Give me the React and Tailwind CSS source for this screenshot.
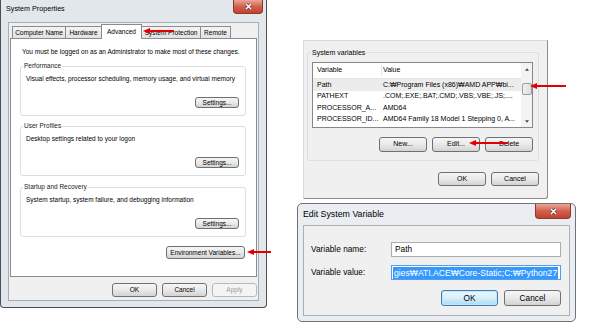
const font = "font-['Liberation_Sans',Arial,'DejaVu_Sans',sans-serif]";
const btn =
  "flex shrink-0 items-center justify-center rounded-[3px] border border-[#707070] bg-linear-to-b from-[#f6f6f6] via-[#e9e9e9] to-[#d3d3d3] text-black";

function CloseBtn({ className }) {
  return (
    <div
      className={`flex items-center justify-center rounded-b-[4px] border border-t-0 border-[#8a3a2e] bg-linear-to-b from-[#e9a798] via-[#d2604d] to-[#c6412d] ${className}`}
    >
      <svg viewBox="0 0 10 8" className="h-[7px] w-[9px]">
        <path d="M2 1 L8 7 M8 1 L2 7" stroke="#4a1c14" strokeWidth="3" />
        <path d="M2 1 L8 7 M8 1 L2 7" stroke="#fff" strokeWidth="1.7" />
      </svg>
    </div>
  );
}

function Group({ label, text, className = "" }) {
  return (
    <div className={`relative ml-[9px] h-[50px] w-[226px] shrink-0 rounded-[3px] border border-[#d5dfe5] ${className}`}>
      <span className="absolute -top-[5px] left-[2px] bg-white px-[1px] leading-[8px] text-[#1b1b1b]">{label}</span>
      <div className="pl-[5px] pt-[8px] leading-[8px]">{text}</div>
      <div className="mt-[14px] flex justify-end pr-[6px]">
        <div className={`${btn} h-[11px] w-[44px]`}>Settings...</div>
      </div>
    </div>
  );
}

function SystemProperties() {
  const tabs = [
    { name: "Computer Name", w: "w-[54px]" },
    { name: "Hardware", w: "w-[37px]" },
    { name: "Advanced", w: "w-[41px]", active: true },
    { name: "System Protection", w: "w-[60px]" },
    { name: "Remote", w: "w-[31px]" },
  ];
  return (
    <div className="absolute left-0 top-0 flex h-[308px] w-[267px] flex-col rounded-b-[4px] border border-t-0 border-[#4b4f55] bg-[#e2e7ec] text-[6.5px]">
      <div className="relative flex h-[22px] shrink-0 items-center pb-[4px] pl-[5px] text-[7.2px] text-black">
        System Properties
        <CloseBtn className="absolute right-[3px] top-0 h-[14px] w-[30px]" />
      </div>
      <div className="mx-[7px] mb-[6px] flex flex-1 flex-col border border-[#a5adb6] bg-[#f0f0f0] px-[1px] pt-[1px]">
        <div className="ml-[2px] flex h-[14px] items-end">
          {tabs.map((t, i) =>
            t.active ? (
              <div
                key={t.name}
                className={`relative z-10 -mb-px -ml-px flex h-[15px] items-start justify-center border border-b-0 border-[#898c95] bg-white pt-[2px] ${t.w}`}
              >
                {t.name}
              </div>
            ) : (
              <div
                key={t.name}
                className={`flex h-[12px] items-center justify-center border border-b-0 border-[#898c95] bg-linear-to-b from-[#f4f4f4] to-[#e2e2e2] ${i ? "-ml-px" : ""} ${t.w}`}
              >
                {t.name}
              </div>
            )
          )}
        </div>
        <div className="flex h-[239px] flex-col border border-[#898c95] bg-white">
          <p className="mt-[9px] pl-[11px] leading-[8px]">
            You must be logged on as an Administrator to make most of these changes.
          </p>
          <Group
            className="mt-[10px]"
            label="Performance"
            text="Visual effects, processor scheduling, memory usage, and virtual memory"
          />
          <Group className="mt-[10px]" label="User Profiles" text="Desktop settings related to your logon" />
          <Group
            className="mt-[11px]"
            label="Startup and Recovery"
            text="System startup, system failure, and debugging information"
          />
          <div className="mt-[9px] flex justify-end pr-[11px]">
            <div className={`${btn} h-[13px] w-[79px]`}>Environment Variables...</div>
          </div>
        </div>
        <div className="mt-[6px] flex justify-end gap-[5px]">
          <div className={`${btn} h-[14px] w-[45px]`}>OK</div>
          <div className={`${btn} h-[14px] w-[45px]`}>Cancel</div>
          <div className="flex h-[14px] w-[45px] items-center justify-center rounded-[3px] border border-[#b5b9bd] bg-[#f4f4f4] text-[#9a9a9a]">
            Apply
          </div>
        </div>
      </div>
    </div>
  );
}

function SystemVariables() {
  const rows = [
    ["Path", "C:₩Program Files (x86)₩AMD APP₩bi..."],
    ["PATHEXT", ".COM;.EXE;.BAT;.CMD;.VBS;.VBE;.JS;...."],
    ["PROCESSOR_A...", "AMD64"],
    ["PROCESSOR_ID...", "AMD64 Family 18 Model 1 Stepping 0, A..."],
  ];
  return (
    <div className="absolute left-[303px] top-[40px] flex h-[159px] w-[245px] flex-col rounded-br-[3px] border border-[#dadada] border-b-[#8c8c8c] border-r-[#8c8c8c] bg-[#f0f0f0] px-[3px] text-[7px]">
      <div className="relative mr-[5px] mt-[11px] flex h-[109px] flex-col rounded-[3px] border border-[#d5dfe5]">
        <span className="absolute -top-[5px] left-[3px] bg-[#f0f0f0] px-[1px] leading-[9px]">System variables</span>
        <div className="ml-[4px] mr-[5px] mt-[9px] flex h-[66px] border border-[#828790] bg-white">
          <div className="flex flex-1 flex-col">
            <div className="flex h-[16px] shrink-0 items-center border-b border-[#e5e5e5]">
              <div className="w-[69px] border-r border-[#e5e5e5] pl-[4px]">Variable</div>
              <div className="pl-[1px]">Value</div>
            </div>
            {rows.map(([k, v], i) => (
              <div key={k} className={`flex h-[11.5px] shrink-0 items-center ${i === 0 ? "bg-[#ececec]" : ""}`}>
                <div className="w-[69px] pl-[4px]">{k}</div>
                <div className="whitespace-nowrap pl-[1px]">{v}</div>
              </div>
            ))}
          </div>
          <div className="flex w-[11px] flex-col items-center bg-[#f3f3f3]">
            <svg viewBox="0 0 6 4" className="mt-[5px] h-[3px] w-[4px]">
              <path d="M0 4 L3 0 L6 4 Z" fill="#444" />
            </svg>
            <div className="mt-[12px] h-[12px] w-[10px] rounded-[2px] border border-[#9b9b9b] bg-linear-to-r from-[#f2f2f2] to-[#dcdcdc]" />
            <svg viewBox="0 0 6 4" className="mt-auto mb-[4px] h-[3px] w-[4px]">
              <path d="M0 0 L3 4 L6 0 Z" fill="#444" />
            </svg>
          </div>
        </div>
        <div className="mt-[9px] flex justify-end gap-[5px] pr-[5px]">
          <div className={`${btn} h-[15px] w-[48px]`}>New...</div>
          <div className={`${btn} h-[15px] w-[48px]`}>Edit...</div>
          <div className={`${btn} h-[15px] w-[48px]`}>Delete</div>
        </div>
      </div>
      <div className="mr-[5px] mt-[11px] flex justify-end gap-[5px]">
        <div className={`${btn} h-[14px] w-[48px]`}>OK</div>
        <div className={`${btn} h-[14px] w-[48px]`}>Cancel</div>
      </div>
    </div>
  );
}

function EditVariable() {
  return (
    <div className="absolute left-[297px] top-[203px] flex h-[119px] w-[279px] flex-col rounded-[5px] border border-[#6f7378] bg-[#eaeef2] text-[8.3px]">
      <div className="relative flex h-[21px] shrink-0 items-center pl-[5px] text-[8.8px]">
        Edit System Variable
        <CloseBtn className="absolute right-[4px] top-0 h-[15px] w-[36px]" />
      </div>
      <div className="mx-[5px] mb-[5px] flex flex-1 flex-col border border-[#a9b1b9] bg-[#f0f0f0] px-[7px]">
        <div className="mt-[16px] flex h-[15px] items-center">
          <div className="w-[80px]">Variable name:</div>
          <div className="flex h-[15px] w-[170px] items-center border border-[#abadb3] bg-white pl-[3px]">Path</div>
        </div>
        <div className="mt-[8px] flex h-[15px] items-center">
          <div className="w-[80px]">Variable value:</div>
          <div className="flex h-[15px] w-[170px] items-center overflow-hidden border border-[#569de5] bg-white pl-[1px]">
            <span className="whitespace-nowrap bg-[#3399ff] px-[1px] text-[8.6px] leading-[12px] text-white">
              gies₩ATI.ACE₩Core-Static;C:₩Python27
            </span>
          </div>
        </div>
        <div className="mr-[1px] mt-[10px] flex justify-end gap-[6px]">
          <div className="flex h-[16px] w-[57px] items-center justify-center rounded-[3px] border border-[#3c7fb1] bg-linear-to-b from-[#eaf6fd] via-[#d9f0fc] to-[#a7d9f5] shadow-[inset_0_0_0_1px_#c5e6f8]">
            OK
          </div>
          <div className={`${btn} h-[16px] w-[57px]`}>Cancel</div>
        </div>
      </div>
    </div>
  );
}

function Arrow({ x1, x2, y }) {
  return (
    <g>
      <line x1={x1} y1={y} x2={x2 + 5} y2={y} stroke="#e30000" strokeWidth="2" />
      <path d={`M${x2} ${y} L${x2 + 7} ${y - 3} L${x2 + 7} ${y + 3} Z`} fill="#e30000" />
    </g>
  );
}

export default function App() {
  return (
    <div className={`relative h-[336px] w-[608px] overflow-hidden bg-white text-black ${font}`}>
      <SystemProperties />
      <SystemVariables />
      <EditVariable />
      <svg className="pointer-events-none absolute inset-0 h-[336px] w-[608px]" viewBox="0 0 608 336">
        <Arrow x1={174} x2={143} y={31} />
        <Arrow x1={271} x2={247} y={252} />
        <Arrow x1={566} x2={530} y={86} />
        <Arrow x1={508} x2={469} y={143} />
      </svg>
    </div>
  );
}
